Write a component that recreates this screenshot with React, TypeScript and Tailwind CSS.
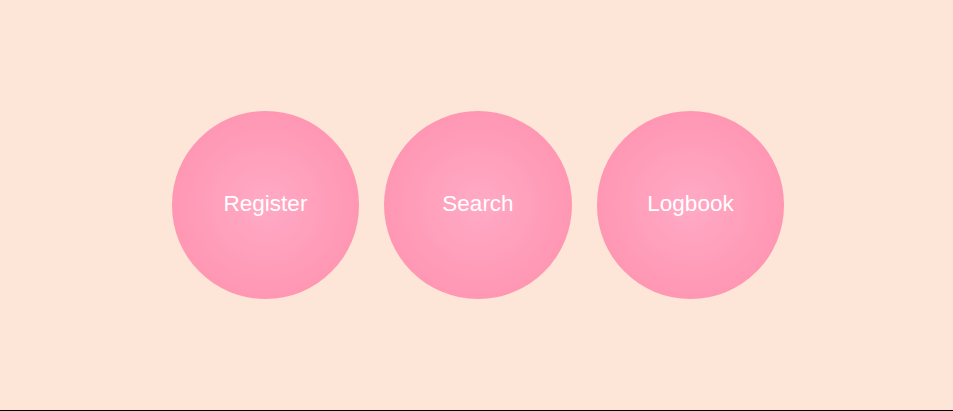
import React from "react";

const items = ["Register", "Search", "Logbook"];

export default function App() {
  return (
    <div
      className="h-[411px] w-full box-border border-b border-black bg-[#fde5d8] flex items-center justify-center gap-[25px] pl-[3px]"
      style={{ fontFamily: '"Liberation Sans", Arial, sans-serif' }}
    >
      {items.map((t) => (
        <div
          key={t}
          className="w-[187.5px] h-[187.5px] rounded-full flex items-center justify-center pb-[3px] text-white text-[22.5px] bg-[radial-gradient(circle,#ffaac6_0%,#ff8fab_100%)]"
        >
          {t}
        </div>
      ))}
    </div>
  );
}
